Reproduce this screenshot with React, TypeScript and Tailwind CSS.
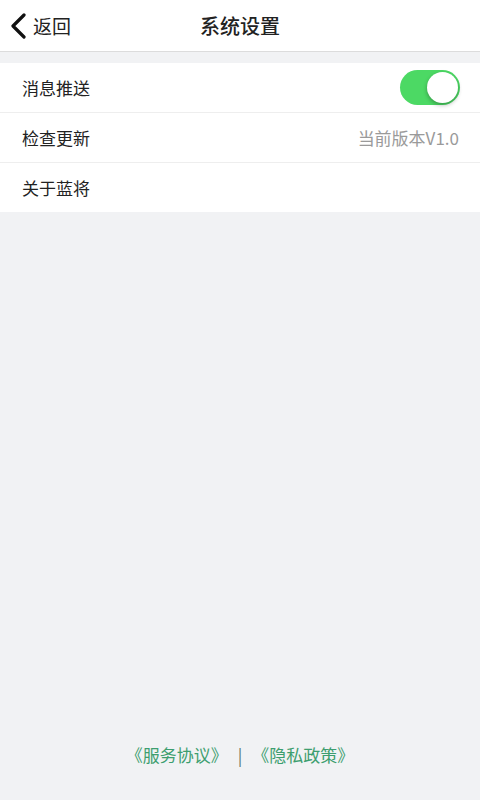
import React, { useState } from "react";

const font = { fontFamily: '"Noto Sans CJK SC", "Noto Sans", sans-serif' };

function Toggle({ on, onChange }: { on: boolean; onChange: () => void }) {
  return (
    <button
      onClick={onChange}
      className={`relative w-[60px] h-[35px] rounded-full transition-colors ${on ? "bg-[#4cd964]" : "bg-[#e5e5e5]"}`}
    >
      <span
        className={`absolute top-[2px] w-[31px] h-[31px] rounded-full bg-white shadow-[0_2px_4px_rgba(0,0,0,0.3)] transition-all ${on ? "left-[27px]" : "left-[2px]"}`}
      />
    </button>
  );
}

export default function App() {
  const [push, setPush] = useState(true);

  return (
    <div className="w-[480px] h-[800px] bg-[#f1f2f4] flex flex-col text-[#222]" style={font}>
      {/* 顶部导航 */}
      <div className="h-[52px] bg-white border-b border-[#dcdcdc] relative flex items-center justify-center">
        <div className="absolute left-[10px] top-0 h-full flex items-center gap-[6px]">
          <svg width="17" height="26" viewBox="0 0 17 26" fill="none">
            <path d="M14 2 L3 13 L14 24" stroke="#111" strokeWidth="3.2" strokeLinecap="round" strokeLinejoin="round" />
          </svg>
          <span className="text-[19px] leading-none">返回</span>
        </div>
        <span className="text-[20px] font-medium leading-none">系统设置</span>
      </div>

      {/* 设置项 */}
      <div className="mt-[11px] bg-white flex flex-col">
        <div className="h-[50px] px-[22px] pr-[20px] flex items-center justify-between border-b border-[#eeeeee]">
          <span className="text-[17px]">消息推送</span>
          <Toggle on={push} onChange={() => setPush(!push)} />
        </div>
        <div className="h-[50px] px-[22px] pr-[21px] flex items-center justify-between border-b border-[#eeeeee]">
          <span className="text-[17px]">检查更新</span>
          <span className="text-[17px] text-[#9a9a9a]">当前版本V1.0</span>
        </div>
        <div className="h-[49px] px-[22px] flex items-center">
          <span className="text-[17px]">关于蓝将</span>
        </div>
      </div>

      <div className="flex-1" />

      {/* 底部协议 */}
      <div className="h-[58px] flex items-start justify-center text-[17px] text-[#3d9e6f]">
        <span>《服务协议》</span>
        <span className="mx-[10px] text-[#5a7a6a]">|</span>
        <span>《隐私政策》</span>
      </div>
    </div>
  );
}
